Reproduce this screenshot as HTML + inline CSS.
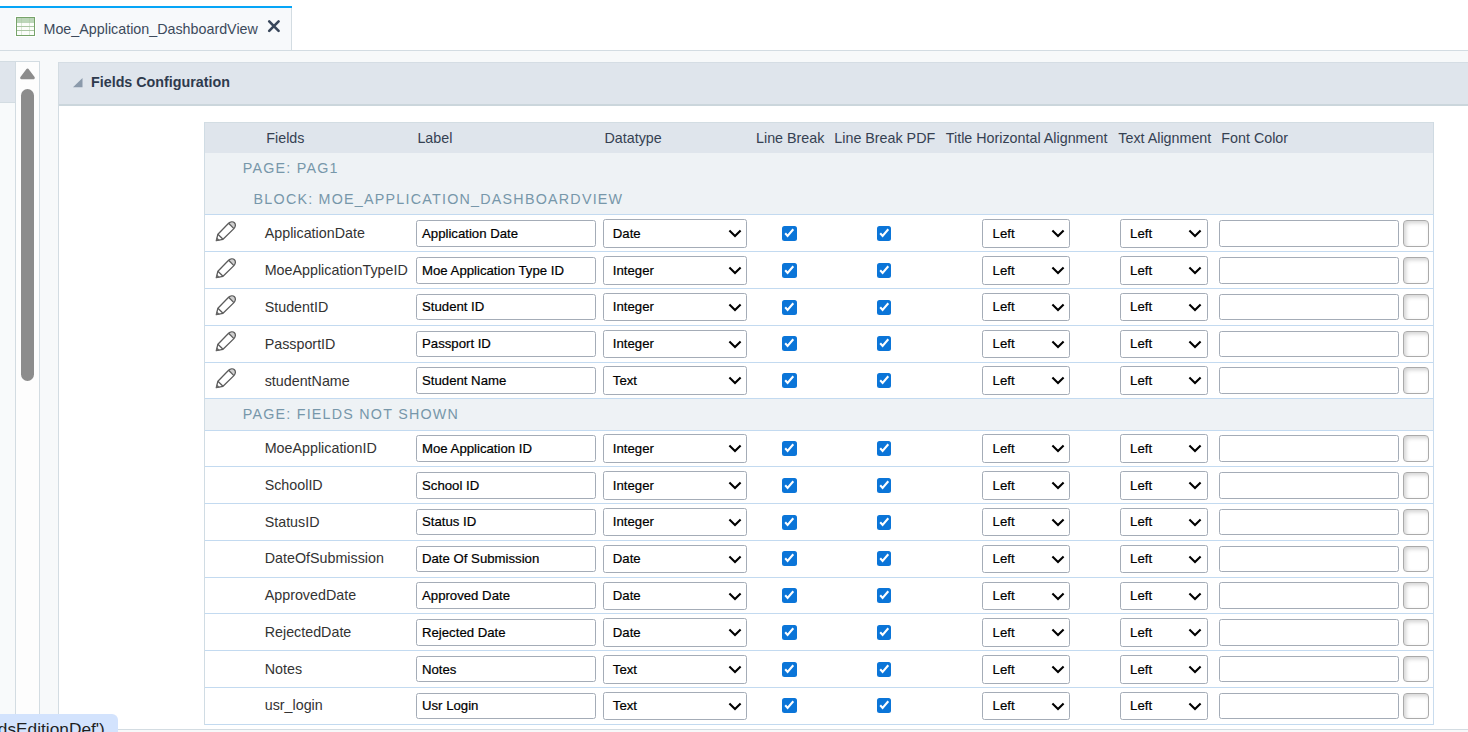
<!DOCTYPE html>
<html><head><meta charset="utf-8"><style>
html,body{margin:0;padding:0;}
body{width:1468px;height:732px;overflow:hidden;position:relative;background:#fff;font-family:"Liberation Sans", sans-serif;}
.t{position:absolute;white-space:nowrap;}
</style></head><body>
<div style="position:absolute;left:0px;top:0px;width:1468px;height:50px;background:#ffffff"></div><div style="position:absolute;left:0px;top:6px;width:291px;height:44px;background:#f7f9fb"></div><div style="position:absolute;left:0px;top:6px;width:292px;height:2px;background:#06a5f7"></div><div style="position:absolute;left:291px;top:8px;width:1px;height:42px;background:#d3dce2"></div><div style="position:absolute;left:0px;top:50px;width:1468px;height:1px;background:#d3dce2"></div><div style="position:absolute;left:0px;top:51px;width:1468px;height:681px;background:#f7f9fa"></div><svg style="position:absolute;left:15px;top:16px" width="21" height="21" viewBox="0 0 21 21">
<rect x="0" y="0" width="21" height="21" fill="#ffffff"/>
<rect x="1.5" y="1.5" width="18" height="18" fill="#fbfdfa" stroke="#76a36a" stroke-width="1"/>
<rect x="2" y="2" width="17" height="5" fill="#bcd6b9"/>
<line x1="2" y1="10.5" x2="19" y2="10.5" stroke="#abc6a4" stroke-width="1"/>
<line x1="2" y1="14.5" x2="19" y2="14.5" stroke="#abc6a4" stroke-width="1"/>
<line x1="6.5" y1="2" x2="6.5" y2="19" stroke="#a8c6a0" stroke-opacity="0.4" stroke-width="1"/>
<line x1="14.5" y1="2" x2="14.5" y2="19" stroke="#a8c6a0" stroke-opacity="0.4" stroke-width="1"/>
</svg><div class="t" style="left:43.5px;top:22.00px;font-size:14.3px;line-height:15.973px;color:#3c4a5c;font-weight:normal;letter-spacing:0px;">Moe_Application_DashboardView</div><svg style="position:absolute;left:266px;top:19px" width="15" height="15" viewBox="0 0 15 15">
<path d="M3.2 2.4 L12.6 11.8 M12.6 2.4 L3.2 11.8" stroke="#38465a" stroke-width="2.6" stroke-linecap="round"/>
</svg><div style="position:absolute;left:0px;top:61px;width:40px;height:1px;background:#d3dce2"></div><div style="position:absolute;left:0px;top:62px;width:15px;height:41px;background:#dfe5ec"></div><div style="position:absolute;left:0px;top:102px;width:15px;height:1px;background:#d3dce2"></div><div style="position:absolute;left:0px;top:103px;width:15px;height:629px;background:#f8fafb"></div><div style="position:absolute;left:15px;top:62px;width:1px;height:670px;background:#d3dce2"></div><div style="position:absolute;left:16px;top:62px;width:23px;height:670px;background:#fdfdfd"></div><div style="position:absolute;left:39px;top:61px;width:1px;height:671px;background:#d3dce2"></div><svg style="position:absolute;left:19px;top:67px" width="17" height="14" viewBox="0 0 17 14">
<path d="M8.5 2.9 L14.5 10.9 L2.5 10.9 Z" fill="#8c8c8c" stroke="#8c8c8c" stroke-width="2.6" stroke-linejoin="round"/>
</svg><div style="position:absolute;left:21px;top:89px;width:13px;height:292px;background:#8c8c8c;border-radius:6.5px"></div><div style="position:absolute;left:58px;top:62px;width:1px;height:670px;background:#d3dce2"></div><div style="position:absolute;left:59px;top:62px;width:1409px;height:42px;background:#dfe5ec"></div><div style="position:absolute;left:59px;top:62px;width:1409px;height:1px;background:#d5dde4"></div><div style="position:absolute;left:59px;top:104px;width:1409px;height:2px;background:#cbd6dc"></div><div style="position:absolute;left:59px;top:106px;width:1409px;height:623px;background:#ffffff"></div><div style="position:absolute;left:59px;top:729px;width:1409px;height:1px;background:#d3dce2"></div><svg style="position:absolute;left:72px;top:77px" width="12" height="12" viewBox="0 0 12 12">
<path d="M10.5 1 L10.5 10.3 L1 10.3 Z" fill="#8b9aab"/>
</svg><div class="t" style="left:91px;top:75.00px;font-size:14.3px;line-height:15.973px;color:#2e3a4d;font-weight:bold;letter-spacing:0px;">Fields Configuration</div><div style="position:absolute;left:204px;top:122px;width:1230px;height:1px;background:#d3dde3"></div><div style="position:absolute;left:204px;top:123px;width:1230px;height:30.5px;background:#dfe5ec"></div><div style="position:absolute;left:204px;top:152.5px;width:1230px;height:61.5px;background:#eef2f5"></div><div style="position:absolute;left:204px;top:398px;width:1230px;height:32px;background:#eef2f5"></div><div style="position:absolute;left:204px;top:122px;width:1px;height:603px;background:#d0dce4"></div><div style="position:absolute;left:1433px;top:122px;width:1px;height:92px;background:#cfdae2"></div><div style="position:absolute;left:1433px;top:214px;width:1px;height:511px;background:#c9dcee"></div><div class="t" style="left:266.3px;top:131.00px;font-size:14.3px;line-height:15.973px;color:#354152;font-weight:normal;letter-spacing:0px;">Fields</div><div class="t" style="left:417.4px;top:131.00px;font-size:14.3px;line-height:15.973px;color:#354152;font-weight:normal;letter-spacing:0px;">Label</div><div class="t" style="left:604.5px;top:131.00px;font-size:14.3px;line-height:15.973px;color:#354152;font-weight:normal;letter-spacing:0px;">Datatype</div><div class="t" style="left:756px;top:131.00px;font-size:14.3px;line-height:15.973px;color:#354152;font-weight:normal;letter-spacing:0px;">Line Break</div><div class="t" style="left:834.3px;top:131.00px;font-size:14.3px;line-height:15.973px;color:#354152;font-weight:normal;letter-spacing:0px;">Line Break PDF</div><div class="t" style="left:945.8px;top:131.00px;font-size:14.3px;line-height:15.973px;color:#354152;font-weight:normal;letter-spacing:0px;">Title Horizontal Alignment</div><div class="t" style="left:1118.3px;top:131.00px;font-size:14.3px;line-height:15.973px;color:#354152;font-weight:normal;letter-spacing:0px;">Text Alignment</div><div class="t" style="left:1221.3px;top:131.00px;font-size:14.3px;line-height:15.973px;color:#354152;font-weight:normal;letter-spacing:0px;">Font Color</div><div class="t" style="left:242.7px;top:161.00px;font-size:14.3px;line-height:15.973px;color:#7797aa;font-weight:normal;letter-spacing:1.23px;">PAGE: PAG1</div><div class="t" style="left:253.6px;top:192.00px;font-size:14.3px;line-height:15.973px;color:#7797aa;font-weight:normal;letter-spacing:1.23px;">BLOCK: MOE_APPLICATION_DASHBOARDVIEW</div><div class="t" style="left:242.7px;top:407.00px;font-size:14.3px;line-height:15.973px;color:#7797aa;font-weight:normal;letter-spacing:1.23px;">PAGE: FIELDS NOT SHOWN</div><div style="position:absolute;left:205px;top:214px;width:1228px;height:1px;background:#c3daf0"></div><div style="position:absolute;left:205px;top:251px;width:1228px;height:1px;background:#c3daf0"></div><div style="position:absolute;left:205px;top:288px;width:1228px;height:1px;background:#c3daf0"></div><div style="position:absolute;left:205px;top:325px;width:1228px;height:1px;background:#c3daf0"></div><div style="position:absolute;left:205px;top:362px;width:1228px;height:1px;background:#c3daf0"></div><div style="position:absolute;left:205px;top:398px;width:1228px;height:1px;background:#c3daf0"></div><div style="position:absolute;left:205px;top:430px;width:1228px;height:1px;background:#c3daf0"></div><div style="position:absolute;left:205px;top:466px;width:1228px;height:1px;background:#c3daf0"></div><div style="position:absolute;left:205px;top:503px;width:1228px;height:1px;background:#c3daf0"></div><div style="position:absolute;left:205px;top:540px;width:1228px;height:1px;background:#c3daf0"></div><div style="position:absolute;left:205px;top:577px;width:1228px;height:1px;background:#c3daf0"></div><div style="position:absolute;left:205px;top:613px;width:1228px;height:1px;background:#c3daf0"></div><div style="position:absolute;left:205px;top:650px;width:1228px;height:1px;background:#c3daf0"></div><div style="position:absolute;left:205px;top:687px;width:1228px;height:1px;background:#c3daf0"></div><div style="position:absolute;left:205px;top:724px;width:1228px;height:1px;background:#c3daf0"></div><svg style="position:absolute;left:205px;top:215px" width="40" height="32" viewBox="0 0 40 32">
<path d="M23.6 8.3 A3.75 3.1 -45 0 1 28.9 13.6 Z" fill="#cfcfcf"/>
<g fill="none" stroke="#5c5c5c" stroke-width="1.3" stroke-linejoin="round">
<path d="M11.3 25.7 L12.9 19.2 L23.6 8.3 A3.75 3.1 -45 0 1 28.9 13.6 L18 24.3 Z"/>
<path d="M12.9 19.2 L18 24.3"/>
<path d="M23.6 8.3 L28.9 13.6"/>
</g>
<path d="M11.0 26.0 L11.8 22.2 L14.8 25.2 Z" fill="#6a6a6a"/>
</svg><div class="t" style="left:264.7px;top:226.00px;font-size:14.3px;line-height:15.973px;color:#333333;font-weight:normal;letter-spacing:0px;">ApplicationDate</div><div style="position:absolute;left:416px;top:220px;width:180px;height:27px;box-sizing:border-box;border:1px solid #a4acb7;border-radius:2.5px;background:#fff"></div><div class="t" style="left:422px;top:227.00px;font-size:13.2px;line-height:14.744px;color:#000;font-weight:normal;letter-spacing:0px;-webkit-text-stroke:0.2px #000">Application Date</div><div style="position:absolute;left:603px;top:219px;width:144px;height:29px;box-sizing:border-box;border:1px solid #a4acb7;border-radius:2.5px;background:#fff"></div><div class="t" style="left:612.8px;top:227.00px;font-size:13.2px;line-height:14.744px;color:#000;font-weight:normal;letter-spacing:0px;-webkit-text-stroke:0.2px #000">Date</div><svg style="position:absolute;left:727.5px;top:228.7px" width="14" height="9" viewBox="0 0 14 9"><path d="M1.4 1.6 L7 7 L12.6 1.6" fill="none" stroke="#000" stroke-width="2.1"/></svg><div style="position:absolute;left:782.2px;top:226px;width:14.6px;height:14.6px;background:#0b75d8;border-radius:2.5px"><svg style="position:absolute;left:0;top:0" width="14.6" height="14.6" viewBox="0 0 14.6 14.6"><path d="M3.2 7.3 L5.6 9.9 L11.3 3.3" fill="none" stroke="#fff" stroke-width="2.1"/></svg></div><div style="position:absolute;left:876.9px;top:226px;width:14.6px;height:14.6px;background:#0b75d8;border-radius:2.5px"><svg style="position:absolute;left:0;top:0" width="14.6" height="14.6" viewBox="0 0 14.6 14.6"><path d="M3.2 7.3 L5.6 9.9 L11.3 3.3" fill="none" stroke="#fff" stroke-width="2.1"/></svg></div><div style="position:absolute;left:982px;top:219px;width:88px;height:29px;box-sizing:border-box;border:1px solid #a4acb7;border-radius:2.5px;background:#fff"></div><div class="t" style="left:992.6px;top:227.00px;font-size:13.2px;line-height:14.744px;color:#000;font-weight:normal;letter-spacing:0px;-webkit-text-stroke:0.2px #000">Left</div><svg style="position:absolute;left:1050.5px;top:228.7px" width="14" height="9" viewBox="0 0 14 9"><path d="M1.4 1.6 L7 7 L12.6 1.6" fill="none" stroke="#000" stroke-width="2.1"/></svg><div style="position:absolute;left:1120px;top:219px;width:88px;height:29px;box-sizing:border-box;border:1px solid #a4acb7;border-radius:2.5px;background:#fff"></div><div class="t" style="left:1130.1px;top:227.00px;font-size:13.2px;line-height:14.744px;color:#000;font-weight:normal;letter-spacing:0px;-webkit-text-stroke:0.2px #000">Left</div><svg style="position:absolute;left:1188.3px;top:228.7px" width="14" height="9" viewBox="0 0 14 9"><path d="M1.4 1.6 L7 7 L12.6 1.6" fill="none" stroke="#000" stroke-width="2.1"/></svg><div style="position:absolute;left:1219px;top:220px;width:180px;height:27px;box-sizing:border-box;border:1px solid #a4acb7;border-radius:2.5px;background:#fff"></div><div style="position:absolute;left:1403px;top:220px;width:26px;height:27px;box-sizing:border-box;border:1.1px solid #aaaaaa;border-radius:4px;background:#fff;box-shadow:inset 2px 2px 4px rgba(0,0,0,0.18)"></div><svg style="position:absolute;left:205px;top:252px" width="40" height="32" viewBox="0 0 40 32">
<path d="M23.6 8.3 A3.75 3.1 -45 0 1 28.9 13.6 Z" fill="#cfcfcf"/>
<g fill="none" stroke="#5c5c5c" stroke-width="1.3" stroke-linejoin="round">
<path d="M11.3 25.7 L12.9 19.2 L23.6 8.3 A3.75 3.1 -45 0 1 28.9 13.6 L18 24.3 Z"/>
<path d="M12.9 19.2 L18 24.3"/>
<path d="M23.6 8.3 L28.9 13.6"/>
</g>
<path d="M11.0 26.0 L11.8 22.2 L14.8 25.2 Z" fill="#6a6a6a"/>
</svg><div class="t" style="left:264.7px;top:263.00px;font-size:14.3px;line-height:15.973px;color:#333333;font-weight:normal;letter-spacing:0px;">MoeApplicationTypeID</div><div style="position:absolute;left:416px;top:257px;width:180px;height:27px;box-sizing:border-box;border:1px solid #a4acb7;border-radius:2.5px;background:#fff"></div><div class="t" style="left:422px;top:264.00px;font-size:13.2px;line-height:14.744px;color:#000;font-weight:normal;letter-spacing:0px;-webkit-text-stroke:0.2px #000">Moe Application Type ID</div><div style="position:absolute;left:603px;top:256px;width:144px;height:29px;box-sizing:border-box;border:1px solid #a4acb7;border-radius:2.5px;background:#fff"></div><div class="t" style="left:612.8px;top:264.00px;font-size:13.2px;line-height:14.744px;color:#000;font-weight:normal;letter-spacing:0px;-webkit-text-stroke:0.2px #000">Integer</div><svg style="position:absolute;left:727.5px;top:265.7px" width="14" height="9" viewBox="0 0 14 9"><path d="M1.4 1.6 L7 7 L12.6 1.6" fill="none" stroke="#000" stroke-width="2.1"/></svg><div style="position:absolute;left:782.2px;top:263px;width:14.6px;height:14.6px;background:#0b75d8;border-radius:2.5px"><svg style="position:absolute;left:0;top:0" width="14.6" height="14.6" viewBox="0 0 14.6 14.6"><path d="M3.2 7.3 L5.6 9.9 L11.3 3.3" fill="none" stroke="#fff" stroke-width="2.1"/></svg></div><div style="position:absolute;left:876.9px;top:263px;width:14.6px;height:14.6px;background:#0b75d8;border-radius:2.5px"><svg style="position:absolute;left:0;top:0" width="14.6" height="14.6" viewBox="0 0 14.6 14.6"><path d="M3.2 7.3 L5.6 9.9 L11.3 3.3" fill="none" stroke="#fff" stroke-width="2.1"/></svg></div><div style="position:absolute;left:982px;top:256px;width:88px;height:29px;box-sizing:border-box;border:1px solid #a4acb7;border-radius:2.5px;background:#fff"></div><div class="t" style="left:992.6px;top:264.00px;font-size:13.2px;line-height:14.744px;color:#000;font-weight:normal;letter-spacing:0px;-webkit-text-stroke:0.2px #000">Left</div><svg style="position:absolute;left:1050.5px;top:265.7px" width="14" height="9" viewBox="0 0 14 9"><path d="M1.4 1.6 L7 7 L12.6 1.6" fill="none" stroke="#000" stroke-width="2.1"/></svg><div style="position:absolute;left:1120px;top:256px;width:88px;height:29px;box-sizing:border-box;border:1px solid #a4acb7;border-radius:2.5px;background:#fff"></div><div class="t" style="left:1130.1px;top:264.00px;font-size:13.2px;line-height:14.744px;color:#000;font-weight:normal;letter-spacing:0px;-webkit-text-stroke:0.2px #000">Left</div><svg style="position:absolute;left:1188.3px;top:265.7px" width="14" height="9" viewBox="0 0 14 9"><path d="M1.4 1.6 L7 7 L12.6 1.6" fill="none" stroke="#000" stroke-width="2.1"/></svg><div style="position:absolute;left:1219px;top:257px;width:180px;height:27px;box-sizing:border-box;border:1px solid #a4acb7;border-radius:2.5px;background:#fff"></div><div style="position:absolute;left:1403px;top:257px;width:26px;height:27px;box-sizing:border-box;border:1.1px solid #aaaaaa;border-radius:4px;background:#fff;box-shadow:inset 2px 2px 4px rgba(0,0,0,0.18)"></div><svg style="position:absolute;left:205px;top:289px" width="40" height="32" viewBox="0 0 40 32">
<path d="M23.6 8.3 A3.75 3.1 -45 0 1 28.9 13.6 Z" fill="#cfcfcf"/>
<g fill="none" stroke="#5c5c5c" stroke-width="1.3" stroke-linejoin="round">
<path d="M11.3 25.7 L12.9 19.2 L23.6 8.3 A3.75 3.1 -45 0 1 28.9 13.6 L18 24.3 Z"/>
<path d="M12.9 19.2 L18 24.3"/>
<path d="M23.6 8.3 L28.9 13.6"/>
</g>
<path d="M11.0 26.0 L11.8 22.2 L14.8 25.2 Z" fill="#6a6a6a"/>
</svg><div class="t" style="left:264.7px;top:300.00px;font-size:14.3px;line-height:15.973px;color:#333333;font-weight:normal;letter-spacing:0px;">StudentID</div><div style="position:absolute;left:416px;top:294px;width:180px;height:26px;box-sizing:border-box;border:1px solid #a4acb7;border-radius:2.5px;background:#fff"></div><div class="t" style="left:422px;top:300.00px;font-size:13.2px;line-height:14.744px;color:#000;font-weight:normal;letter-spacing:0px;-webkit-text-stroke:0.2px #000">Student ID</div><div style="position:absolute;left:603px;top:293px;width:144px;height:28px;box-sizing:border-box;border:1px solid #a4acb7;border-radius:2.5px;background:#fff"></div><div class="t" style="left:612.8px;top:300.00px;font-size:13.2px;line-height:14.744px;color:#000;font-weight:normal;letter-spacing:0px;-webkit-text-stroke:0.2px #000">Integer</div><svg style="position:absolute;left:727.5px;top:302.7px" width="14" height="9" viewBox="0 0 14 9"><path d="M1.4 1.6 L7 7 L12.6 1.6" fill="none" stroke="#000" stroke-width="2.1"/></svg><div style="position:absolute;left:782.2px;top:300px;width:14.6px;height:14.6px;background:#0b75d8;border-radius:2.5px"><svg style="position:absolute;left:0;top:0" width="14.6" height="14.6" viewBox="0 0 14.6 14.6"><path d="M3.2 7.3 L5.6 9.9 L11.3 3.3" fill="none" stroke="#fff" stroke-width="2.1"/></svg></div><div style="position:absolute;left:876.9px;top:300px;width:14.6px;height:14.6px;background:#0b75d8;border-radius:2.5px"><svg style="position:absolute;left:0;top:0" width="14.6" height="14.6" viewBox="0 0 14.6 14.6"><path d="M3.2 7.3 L5.6 9.9 L11.3 3.3" fill="none" stroke="#fff" stroke-width="2.1"/></svg></div><div style="position:absolute;left:982px;top:293px;width:88px;height:28px;box-sizing:border-box;border:1px solid #a4acb7;border-radius:2.5px;background:#fff"></div><div class="t" style="left:992.6px;top:300.00px;font-size:13.2px;line-height:14.744px;color:#000;font-weight:normal;letter-spacing:0px;-webkit-text-stroke:0.2px #000">Left</div><svg style="position:absolute;left:1050.5px;top:302.7px" width="14" height="9" viewBox="0 0 14 9"><path d="M1.4 1.6 L7 7 L12.6 1.6" fill="none" stroke="#000" stroke-width="2.1"/></svg><div style="position:absolute;left:1120px;top:293px;width:88px;height:28px;box-sizing:border-box;border:1px solid #a4acb7;border-radius:2.5px;background:#fff"></div><div class="t" style="left:1130.1px;top:300.00px;font-size:13.2px;line-height:14.744px;color:#000;font-weight:normal;letter-spacing:0px;-webkit-text-stroke:0.2px #000">Left</div><svg style="position:absolute;left:1188.3px;top:302.7px" width="14" height="9" viewBox="0 0 14 9"><path d="M1.4 1.6 L7 7 L12.6 1.6" fill="none" stroke="#000" stroke-width="2.1"/></svg><div style="position:absolute;left:1219px;top:294px;width:180px;height:26px;box-sizing:border-box;border:1px solid #a4acb7;border-radius:2.5px;background:#fff"></div><div style="position:absolute;left:1403px;top:294px;width:26px;height:26px;box-sizing:border-box;border:1.1px solid #aaaaaa;border-radius:4px;background:#fff;box-shadow:inset 2px 2px 4px rgba(0,0,0,0.18)"></div><svg style="position:absolute;left:205px;top:325px" width="40" height="32" viewBox="0 0 40 32">
<path d="M23.6 8.3 A3.75 3.1 -45 0 1 28.9 13.6 Z" fill="#cfcfcf"/>
<g fill="none" stroke="#5c5c5c" stroke-width="1.3" stroke-linejoin="round">
<path d="M11.3 25.7 L12.9 19.2 L23.6 8.3 A3.75 3.1 -45 0 1 28.9 13.6 L18 24.3 Z"/>
<path d="M12.9 19.2 L18 24.3"/>
<path d="M23.6 8.3 L28.9 13.6"/>
</g>
<path d="M11.0 26.0 L11.8 22.2 L14.8 25.2 Z" fill="#6a6a6a"/>
</svg><div class="t" style="left:264.7px;top:337.00px;font-size:14.3px;line-height:15.973px;color:#333333;font-weight:normal;letter-spacing:0px;">PassportID</div><div style="position:absolute;left:416px;top:331px;width:180px;height:26px;box-sizing:border-box;border:1px solid #a4acb7;border-radius:2.5px;background:#fff"></div><div class="t" style="left:422px;top:337.00px;font-size:13.2px;line-height:14.744px;color:#000;font-weight:normal;letter-spacing:0px;-webkit-text-stroke:0.2px #000">Passport ID</div><div style="position:absolute;left:603px;top:330px;width:144px;height:28px;box-sizing:border-box;border:1px solid #a4acb7;border-radius:2.5px;background:#fff"></div><div class="t" style="left:612.8px;top:337.00px;font-size:13.2px;line-height:14.744px;color:#000;font-weight:normal;letter-spacing:0px;-webkit-text-stroke:0.2px #000">Integer</div><svg style="position:absolute;left:727.5px;top:339.7px" width="14" height="9" viewBox="0 0 14 9"><path d="M1.4 1.6 L7 7 L12.6 1.6" fill="none" stroke="#000" stroke-width="2.1"/></svg><div style="position:absolute;left:782.2px;top:336px;width:14.6px;height:14.6px;background:#0b75d8;border-radius:2.5px"><svg style="position:absolute;left:0;top:0" width="14.6" height="14.6" viewBox="0 0 14.6 14.6"><path d="M3.2 7.3 L5.6 9.9 L11.3 3.3" fill="none" stroke="#fff" stroke-width="2.1"/></svg></div><div style="position:absolute;left:876.9px;top:336px;width:14.6px;height:14.6px;background:#0b75d8;border-radius:2.5px"><svg style="position:absolute;left:0;top:0" width="14.6" height="14.6" viewBox="0 0 14.6 14.6"><path d="M3.2 7.3 L5.6 9.9 L11.3 3.3" fill="none" stroke="#fff" stroke-width="2.1"/></svg></div><div style="position:absolute;left:982px;top:330px;width:88px;height:28px;box-sizing:border-box;border:1px solid #a4acb7;border-radius:2.5px;background:#fff"></div><div class="t" style="left:992.6px;top:337.00px;font-size:13.2px;line-height:14.744px;color:#000;font-weight:normal;letter-spacing:0px;-webkit-text-stroke:0.2px #000">Left</div><svg style="position:absolute;left:1050.5px;top:339.7px" width="14" height="9" viewBox="0 0 14 9"><path d="M1.4 1.6 L7 7 L12.6 1.6" fill="none" stroke="#000" stroke-width="2.1"/></svg><div style="position:absolute;left:1120px;top:330px;width:88px;height:28px;box-sizing:border-box;border:1px solid #a4acb7;border-radius:2.5px;background:#fff"></div><div class="t" style="left:1130.1px;top:337.00px;font-size:13.2px;line-height:14.744px;color:#000;font-weight:normal;letter-spacing:0px;-webkit-text-stroke:0.2px #000">Left</div><svg style="position:absolute;left:1188.3px;top:339.7px" width="14" height="9" viewBox="0 0 14 9"><path d="M1.4 1.6 L7 7 L12.6 1.6" fill="none" stroke="#000" stroke-width="2.1"/></svg><div style="position:absolute;left:1219px;top:331px;width:180px;height:26px;box-sizing:border-box;border:1px solid #a4acb7;border-radius:2.5px;background:#fff"></div><div style="position:absolute;left:1403px;top:331px;width:26px;height:26px;box-sizing:border-box;border:1.1px solid #aaaaaa;border-radius:4px;background:#fff;box-shadow:inset 2px 2px 4px rgba(0,0,0,0.18)"></div><svg style="position:absolute;left:205px;top:362px" width="40" height="32" viewBox="0 0 40 32">
<path d="M23.6 8.3 A3.75 3.1 -45 0 1 28.9 13.6 Z" fill="#cfcfcf"/>
<g fill="none" stroke="#5c5c5c" stroke-width="1.3" stroke-linejoin="round">
<path d="M11.3 25.7 L12.9 19.2 L23.6 8.3 A3.75 3.1 -45 0 1 28.9 13.6 L18 24.3 Z"/>
<path d="M12.9 19.2 L18 24.3"/>
<path d="M23.6 8.3 L28.9 13.6"/>
</g>
<path d="M11.0 26.0 L11.8 22.2 L14.8 25.2 Z" fill="#6a6a6a"/>
</svg><div class="t" style="left:264.7px;top:374.00px;font-size:14.3px;line-height:15.973px;color:#333333;font-weight:normal;letter-spacing:0px;">studentName</div><div style="position:absolute;left:416px;top:367px;width:180px;height:27px;box-sizing:border-box;border:1px solid #a4acb7;border-radius:2.5px;background:#fff"></div><div class="t" style="left:422px;top:374.00px;font-size:13.2px;line-height:14.744px;color:#000;font-weight:normal;letter-spacing:0px;-webkit-text-stroke:0.2px #000">Student Name</div><div style="position:absolute;left:603px;top:366px;width:144px;height:29px;box-sizing:border-box;border:1px solid #a4acb7;border-radius:2.5px;background:#fff"></div><div class="t" style="left:612.8px;top:374.00px;font-size:13.2px;line-height:14.744px;color:#000;font-weight:normal;letter-spacing:0px;-webkit-text-stroke:0.2px #000">Text</div><svg style="position:absolute;left:727.5px;top:375.7px" width="14" height="9" viewBox="0 0 14 9"><path d="M1.4 1.6 L7 7 L12.6 1.6" fill="none" stroke="#000" stroke-width="2.1"/></svg><div style="position:absolute;left:782.2px;top:373px;width:14.6px;height:14.6px;background:#0b75d8;border-radius:2.5px"><svg style="position:absolute;left:0;top:0" width="14.6" height="14.6" viewBox="0 0 14.6 14.6"><path d="M3.2 7.3 L5.6 9.9 L11.3 3.3" fill="none" stroke="#fff" stroke-width="2.1"/></svg></div><div style="position:absolute;left:876.9px;top:373px;width:14.6px;height:14.6px;background:#0b75d8;border-radius:2.5px"><svg style="position:absolute;left:0;top:0" width="14.6" height="14.6" viewBox="0 0 14.6 14.6"><path d="M3.2 7.3 L5.6 9.9 L11.3 3.3" fill="none" stroke="#fff" stroke-width="2.1"/></svg></div><div style="position:absolute;left:982px;top:366px;width:88px;height:29px;box-sizing:border-box;border:1px solid #a4acb7;border-radius:2.5px;background:#fff"></div><div class="t" style="left:992.6px;top:374.00px;font-size:13.2px;line-height:14.744px;color:#000;font-weight:normal;letter-spacing:0px;-webkit-text-stroke:0.2px #000">Left</div><svg style="position:absolute;left:1050.5px;top:375.7px" width="14" height="9" viewBox="0 0 14 9"><path d="M1.4 1.6 L7 7 L12.6 1.6" fill="none" stroke="#000" stroke-width="2.1"/></svg><div style="position:absolute;left:1120px;top:366px;width:88px;height:29px;box-sizing:border-box;border:1px solid #a4acb7;border-radius:2.5px;background:#fff"></div><div class="t" style="left:1130.1px;top:374.00px;font-size:13.2px;line-height:14.744px;color:#000;font-weight:normal;letter-spacing:0px;-webkit-text-stroke:0.2px #000">Left</div><svg style="position:absolute;left:1188.3px;top:375.7px" width="14" height="9" viewBox="0 0 14 9"><path d="M1.4 1.6 L7 7 L12.6 1.6" fill="none" stroke="#000" stroke-width="2.1"/></svg><div style="position:absolute;left:1219px;top:367px;width:180px;height:27px;box-sizing:border-box;border:1px solid #a4acb7;border-radius:2.5px;background:#fff"></div><div style="position:absolute;left:1403px;top:367px;width:26px;height:27px;box-sizing:border-box;border:1.1px solid #aaaaaa;border-radius:4px;background:#fff;box-shadow:inset 2px 2px 4px rgba(0,0,0,0.18)"></div><div class="t" style="left:264.7px;top:441.00px;font-size:14.3px;line-height:15.973px;color:#333333;font-weight:normal;letter-spacing:0px;">MoeApplicationID</div><div style="position:absolute;left:416px;top:435px;width:180px;height:27px;box-sizing:border-box;border:1px solid #a4acb7;border-radius:2.5px;background:#fff"></div><div class="t" style="left:422px;top:442.00px;font-size:13.2px;line-height:14.744px;color:#000;font-weight:normal;letter-spacing:0px;-webkit-text-stroke:0.2px #000">Moe Application ID</div><div style="position:absolute;left:603px;top:434px;width:144px;height:29px;box-sizing:border-box;border:1px solid #a4acb7;border-radius:2.5px;background:#fff"></div><div class="t" style="left:612.8px;top:442.00px;font-size:13.2px;line-height:14.744px;color:#000;font-weight:normal;letter-spacing:0px;-webkit-text-stroke:0.2px #000">Integer</div><svg style="position:absolute;left:727.5px;top:443.7px" width="14" height="9" viewBox="0 0 14 9"><path d="M1.4 1.6 L7 7 L12.6 1.6" fill="none" stroke="#000" stroke-width="2.1"/></svg><div style="position:absolute;left:782.2px;top:441px;width:14.6px;height:14.6px;background:#0b75d8;border-radius:2.5px"><svg style="position:absolute;left:0;top:0" width="14.6" height="14.6" viewBox="0 0 14.6 14.6"><path d="M3.2 7.3 L5.6 9.9 L11.3 3.3" fill="none" stroke="#fff" stroke-width="2.1"/></svg></div><div style="position:absolute;left:876.9px;top:441px;width:14.6px;height:14.6px;background:#0b75d8;border-radius:2.5px"><svg style="position:absolute;left:0;top:0" width="14.6" height="14.6" viewBox="0 0 14.6 14.6"><path d="M3.2 7.3 L5.6 9.9 L11.3 3.3" fill="none" stroke="#fff" stroke-width="2.1"/></svg></div><div style="position:absolute;left:982px;top:434px;width:88px;height:29px;box-sizing:border-box;border:1px solid #a4acb7;border-radius:2.5px;background:#fff"></div><div class="t" style="left:992.6px;top:442.00px;font-size:13.2px;line-height:14.744px;color:#000;font-weight:normal;letter-spacing:0px;-webkit-text-stroke:0.2px #000">Left</div><svg style="position:absolute;left:1050.5px;top:443.7px" width="14" height="9" viewBox="0 0 14 9"><path d="M1.4 1.6 L7 7 L12.6 1.6" fill="none" stroke="#000" stroke-width="2.1"/></svg><div style="position:absolute;left:1120px;top:434px;width:88px;height:29px;box-sizing:border-box;border:1px solid #a4acb7;border-radius:2.5px;background:#fff"></div><div class="t" style="left:1130.1px;top:442.00px;font-size:13.2px;line-height:14.744px;color:#000;font-weight:normal;letter-spacing:0px;-webkit-text-stroke:0.2px #000">Left</div><svg style="position:absolute;left:1188.3px;top:443.7px" width="14" height="9" viewBox="0 0 14 9"><path d="M1.4 1.6 L7 7 L12.6 1.6" fill="none" stroke="#000" stroke-width="2.1"/></svg><div style="position:absolute;left:1219px;top:435px;width:180px;height:27px;box-sizing:border-box;border:1px solid #a4acb7;border-radius:2.5px;background:#fff"></div><div style="position:absolute;left:1403px;top:435px;width:26px;height:27px;box-sizing:border-box;border:1.1px solid #aaaaaa;border-radius:4px;background:#fff;box-shadow:inset 2px 2px 4px rgba(0,0,0,0.18)"></div><div class="t" style="left:264.7px;top:478.00px;font-size:14.3px;line-height:15.973px;color:#333333;font-weight:normal;letter-spacing:0px;">SchoolID</div><div style="position:absolute;left:416px;top:472px;width:180px;height:27px;box-sizing:border-box;border:1px solid #a4acb7;border-radius:2.5px;background:#fff"></div><div class="t" style="left:422px;top:479.00px;font-size:13.2px;line-height:14.744px;color:#000;font-weight:normal;letter-spacing:0px;-webkit-text-stroke:0.2px #000">School ID</div><div style="position:absolute;left:603px;top:471px;width:144px;height:29px;box-sizing:border-box;border:1px solid #a4acb7;border-radius:2.5px;background:#fff"></div><div class="t" style="left:612.8px;top:479.00px;font-size:13.2px;line-height:14.744px;color:#000;font-weight:normal;letter-spacing:0px;-webkit-text-stroke:0.2px #000">Integer</div><svg style="position:absolute;left:727.5px;top:480.7px" width="14" height="9" viewBox="0 0 14 9"><path d="M1.4 1.6 L7 7 L12.6 1.6" fill="none" stroke="#000" stroke-width="2.1"/></svg><div style="position:absolute;left:782.2px;top:478px;width:14.6px;height:14.6px;background:#0b75d8;border-radius:2.5px"><svg style="position:absolute;left:0;top:0" width="14.6" height="14.6" viewBox="0 0 14.6 14.6"><path d="M3.2 7.3 L5.6 9.9 L11.3 3.3" fill="none" stroke="#fff" stroke-width="2.1"/></svg></div><div style="position:absolute;left:876.9px;top:478px;width:14.6px;height:14.6px;background:#0b75d8;border-radius:2.5px"><svg style="position:absolute;left:0;top:0" width="14.6" height="14.6" viewBox="0 0 14.6 14.6"><path d="M3.2 7.3 L5.6 9.9 L11.3 3.3" fill="none" stroke="#fff" stroke-width="2.1"/></svg></div><div style="position:absolute;left:982px;top:471px;width:88px;height:29px;box-sizing:border-box;border:1px solid #a4acb7;border-radius:2.5px;background:#fff"></div><div class="t" style="left:992.6px;top:479.00px;font-size:13.2px;line-height:14.744px;color:#000;font-weight:normal;letter-spacing:0px;-webkit-text-stroke:0.2px #000">Left</div><svg style="position:absolute;left:1050.5px;top:480.7px" width="14" height="9" viewBox="0 0 14 9"><path d="M1.4 1.6 L7 7 L12.6 1.6" fill="none" stroke="#000" stroke-width="2.1"/></svg><div style="position:absolute;left:1120px;top:471px;width:88px;height:29px;box-sizing:border-box;border:1px solid #a4acb7;border-radius:2.5px;background:#fff"></div><div class="t" style="left:1130.1px;top:479.00px;font-size:13.2px;line-height:14.744px;color:#000;font-weight:normal;letter-spacing:0px;-webkit-text-stroke:0.2px #000">Left</div><svg style="position:absolute;left:1188.3px;top:480.7px" width="14" height="9" viewBox="0 0 14 9"><path d="M1.4 1.6 L7 7 L12.6 1.6" fill="none" stroke="#000" stroke-width="2.1"/></svg><div style="position:absolute;left:1219px;top:472px;width:180px;height:27px;box-sizing:border-box;border:1px solid #a4acb7;border-radius:2.5px;background:#fff"></div><div style="position:absolute;left:1403px;top:472px;width:26px;height:27px;box-sizing:border-box;border:1.1px solid #aaaaaa;border-radius:4px;background:#fff;box-shadow:inset 2px 2px 4px rgba(0,0,0,0.18)"></div><div class="t" style="left:264.7px;top:515.00px;font-size:14.3px;line-height:15.973px;color:#333333;font-weight:normal;letter-spacing:0px;">StatusID</div><div style="position:absolute;left:416px;top:509px;width:180px;height:26px;box-sizing:border-box;border:1px solid #a4acb7;border-radius:2.5px;background:#fff"></div><div class="t" style="left:422px;top:515.00px;font-size:13.2px;line-height:14.744px;color:#000;font-weight:normal;letter-spacing:0px;-webkit-text-stroke:0.2px #000">Status ID</div><div style="position:absolute;left:603px;top:508px;width:144px;height:28px;box-sizing:border-box;border:1px solid #a4acb7;border-radius:2.5px;background:#fff"></div><div class="t" style="left:612.8px;top:515.00px;font-size:13.2px;line-height:14.744px;color:#000;font-weight:normal;letter-spacing:0px;-webkit-text-stroke:0.2px #000">Integer</div><svg style="position:absolute;left:727.5px;top:517.7px" width="14" height="9" viewBox="0 0 14 9"><path d="M1.4 1.6 L7 7 L12.6 1.6" fill="none" stroke="#000" stroke-width="2.1"/></svg><div style="position:absolute;left:782.2px;top:515px;width:14.6px;height:14.6px;background:#0b75d8;border-radius:2.5px"><svg style="position:absolute;left:0;top:0" width="14.6" height="14.6" viewBox="0 0 14.6 14.6"><path d="M3.2 7.3 L5.6 9.9 L11.3 3.3" fill="none" stroke="#fff" stroke-width="2.1"/></svg></div><div style="position:absolute;left:876.9px;top:515px;width:14.6px;height:14.6px;background:#0b75d8;border-radius:2.5px"><svg style="position:absolute;left:0;top:0" width="14.6" height="14.6" viewBox="0 0 14.6 14.6"><path d="M3.2 7.3 L5.6 9.9 L11.3 3.3" fill="none" stroke="#fff" stroke-width="2.1"/></svg></div><div style="position:absolute;left:982px;top:508px;width:88px;height:28px;box-sizing:border-box;border:1px solid #a4acb7;border-radius:2.5px;background:#fff"></div><div class="t" style="left:992.6px;top:515.00px;font-size:13.2px;line-height:14.744px;color:#000;font-weight:normal;letter-spacing:0px;-webkit-text-stroke:0.2px #000">Left</div><svg style="position:absolute;left:1050.5px;top:517.7px" width="14" height="9" viewBox="0 0 14 9"><path d="M1.4 1.6 L7 7 L12.6 1.6" fill="none" stroke="#000" stroke-width="2.1"/></svg><div style="position:absolute;left:1120px;top:508px;width:88px;height:28px;box-sizing:border-box;border:1px solid #a4acb7;border-radius:2.5px;background:#fff"></div><div class="t" style="left:1130.1px;top:515.00px;font-size:13.2px;line-height:14.744px;color:#000;font-weight:normal;letter-spacing:0px;-webkit-text-stroke:0.2px #000">Left</div><svg style="position:absolute;left:1188.3px;top:517.7px" width="14" height="9" viewBox="0 0 14 9"><path d="M1.4 1.6 L7 7 L12.6 1.6" fill="none" stroke="#000" stroke-width="2.1"/></svg><div style="position:absolute;left:1219px;top:509px;width:180px;height:26px;box-sizing:border-box;border:1px solid #a4acb7;border-radius:2.5px;background:#fff"></div><div style="position:absolute;left:1403px;top:509px;width:26px;height:26px;box-sizing:border-box;border:1.1px solid #aaaaaa;border-radius:4px;background:#fff;box-shadow:inset 2px 2px 4px rgba(0,0,0,0.18)"></div><div class="t" style="left:264.7px;top:551.00px;font-size:14.3px;line-height:15.973px;color:#333333;font-weight:normal;letter-spacing:0px;">DateOfSubmission</div><div style="position:absolute;left:416px;top:546px;width:180px;height:26px;box-sizing:border-box;border:1px solid #a4acb7;border-radius:2.5px;background:#fff"></div><div class="t" style="left:422px;top:552.00px;font-size:13.2px;line-height:14.744px;color:#000;font-weight:normal;letter-spacing:0px;-webkit-text-stroke:0.2px #000">Date Of Submission</div><div style="position:absolute;left:603px;top:545px;width:144px;height:28px;box-sizing:border-box;border:1px solid #a4acb7;border-radius:2.5px;background:#fff"></div><div class="t" style="left:612.8px;top:552.00px;font-size:13.2px;line-height:14.744px;color:#000;font-weight:normal;letter-spacing:0px;-webkit-text-stroke:0.2px #000">Date</div><svg style="position:absolute;left:727.5px;top:554.7px" width="14" height="9" viewBox="0 0 14 9"><path d="M1.4 1.6 L7 7 L12.6 1.6" fill="none" stroke="#000" stroke-width="2.1"/></svg><div style="position:absolute;left:782.2px;top:551px;width:14.6px;height:14.6px;background:#0b75d8;border-radius:2.5px"><svg style="position:absolute;left:0;top:0" width="14.6" height="14.6" viewBox="0 0 14.6 14.6"><path d="M3.2 7.3 L5.6 9.9 L11.3 3.3" fill="none" stroke="#fff" stroke-width="2.1"/></svg></div><div style="position:absolute;left:876.9px;top:551px;width:14.6px;height:14.6px;background:#0b75d8;border-radius:2.5px"><svg style="position:absolute;left:0;top:0" width="14.6" height="14.6" viewBox="0 0 14.6 14.6"><path d="M3.2 7.3 L5.6 9.9 L11.3 3.3" fill="none" stroke="#fff" stroke-width="2.1"/></svg></div><div style="position:absolute;left:982px;top:545px;width:88px;height:28px;box-sizing:border-box;border:1px solid #a4acb7;border-radius:2.5px;background:#fff"></div><div class="t" style="left:992.6px;top:552.00px;font-size:13.2px;line-height:14.744px;color:#000;font-weight:normal;letter-spacing:0px;-webkit-text-stroke:0.2px #000">Left</div><svg style="position:absolute;left:1050.5px;top:554.7px" width="14" height="9" viewBox="0 0 14 9"><path d="M1.4 1.6 L7 7 L12.6 1.6" fill="none" stroke="#000" stroke-width="2.1"/></svg><div style="position:absolute;left:1120px;top:545px;width:88px;height:28px;box-sizing:border-box;border:1px solid #a4acb7;border-radius:2.5px;background:#fff"></div><div class="t" style="left:1130.1px;top:552.00px;font-size:13.2px;line-height:14.744px;color:#000;font-weight:normal;letter-spacing:0px;-webkit-text-stroke:0.2px #000">Left</div><svg style="position:absolute;left:1188.3px;top:554.7px" width="14" height="9" viewBox="0 0 14 9"><path d="M1.4 1.6 L7 7 L12.6 1.6" fill="none" stroke="#000" stroke-width="2.1"/></svg><div style="position:absolute;left:1219px;top:546px;width:180px;height:26px;box-sizing:border-box;border:1px solid #a4acb7;border-radius:2.5px;background:#fff"></div><div style="position:absolute;left:1403px;top:546px;width:26px;height:26px;box-sizing:border-box;border:1.1px solid #aaaaaa;border-radius:4px;background:#fff;box-shadow:inset 2px 2px 4px rgba(0,0,0,0.18)"></div><div class="t" style="left:264.7px;top:588.00px;font-size:14.3px;line-height:15.973px;color:#333333;font-weight:normal;letter-spacing:0px;">ApprovedDate</div><div style="position:absolute;left:416px;top:582px;width:180px;height:27px;box-sizing:border-box;border:1px solid #a4acb7;border-radius:2.5px;background:#fff"></div><div class="t" style="left:422px;top:589.00px;font-size:13.2px;line-height:14.744px;color:#000;font-weight:normal;letter-spacing:0px;-webkit-text-stroke:0.2px #000">Approved Date</div><div style="position:absolute;left:603px;top:582px;width:144px;height:28px;box-sizing:border-box;border:1px solid #a4acb7;border-radius:2.5px;background:#fff"></div><div class="t" style="left:612.8px;top:589.00px;font-size:13.2px;line-height:14.744px;color:#000;font-weight:normal;letter-spacing:0px;-webkit-text-stroke:0.2px #000">Date</div><svg style="position:absolute;left:727.5px;top:591.7px" width="14" height="9" viewBox="0 0 14 9"><path d="M1.4 1.6 L7 7 L12.6 1.6" fill="none" stroke="#000" stroke-width="2.1"/></svg><div style="position:absolute;left:782.2px;top:588px;width:14.6px;height:14.6px;background:#0b75d8;border-radius:2.5px"><svg style="position:absolute;left:0;top:0" width="14.6" height="14.6" viewBox="0 0 14.6 14.6"><path d="M3.2 7.3 L5.6 9.9 L11.3 3.3" fill="none" stroke="#fff" stroke-width="2.1"/></svg></div><div style="position:absolute;left:876.9px;top:588px;width:14.6px;height:14.6px;background:#0b75d8;border-radius:2.5px"><svg style="position:absolute;left:0;top:0" width="14.6" height="14.6" viewBox="0 0 14.6 14.6"><path d="M3.2 7.3 L5.6 9.9 L11.3 3.3" fill="none" stroke="#fff" stroke-width="2.1"/></svg></div><div style="position:absolute;left:982px;top:582px;width:88px;height:28px;box-sizing:border-box;border:1px solid #a4acb7;border-radius:2.5px;background:#fff"></div><div class="t" style="left:992.6px;top:589.00px;font-size:13.2px;line-height:14.744px;color:#000;font-weight:normal;letter-spacing:0px;-webkit-text-stroke:0.2px #000">Left</div><svg style="position:absolute;left:1050.5px;top:591.7px" width="14" height="9" viewBox="0 0 14 9"><path d="M1.4 1.6 L7 7 L12.6 1.6" fill="none" stroke="#000" stroke-width="2.1"/></svg><div style="position:absolute;left:1120px;top:582px;width:88px;height:28px;box-sizing:border-box;border:1px solid #a4acb7;border-radius:2.5px;background:#fff"></div><div class="t" style="left:1130.1px;top:589.00px;font-size:13.2px;line-height:14.744px;color:#000;font-weight:normal;letter-spacing:0px;-webkit-text-stroke:0.2px #000">Left</div><svg style="position:absolute;left:1188.3px;top:591.7px" width="14" height="9" viewBox="0 0 14 9"><path d="M1.4 1.6 L7 7 L12.6 1.6" fill="none" stroke="#000" stroke-width="2.1"/></svg><div style="position:absolute;left:1219px;top:582px;width:180px;height:27px;box-sizing:border-box;border:1px solid #a4acb7;border-radius:2.5px;background:#fff"></div><div style="position:absolute;left:1403px;top:582px;width:26px;height:27px;box-sizing:border-box;border:1.1px solid #aaaaaa;border-radius:4px;background:#fff;box-shadow:inset 2px 2px 4px rgba(0,0,0,0.18)"></div><div class="t" style="left:264.7px;top:625.00px;font-size:14.3px;line-height:15.973px;color:#333333;font-weight:normal;letter-spacing:0px;">RejectedDate</div><div style="position:absolute;left:416px;top:619px;width:180px;height:27px;box-sizing:border-box;border:1px solid #a4acb7;border-radius:2.5px;background:#fff"></div><div class="t" style="left:422px;top:626.00px;font-size:13.2px;line-height:14.744px;color:#000;font-weight:normal;letter-spacing:0px;-webkit-text-stroke:0.2px #000">Rejected Date</div><div style="position:absolute;left:603px;top:618px;width:144px;height:29px;box-sizing:border-box;border:1px solid #a4acb7;border-radius:2.5px;background:#fff"></div><div class="t" style="left:612.8px;top:626.00px;font-size:13.2px;line-height:14.744px;color:#000;font-weight:normal;letter-spacing:0px;-webkit-text-stroke:0.2px #000">Date</div><svg style="position:absolute;left:727.5px;top:627.7px" width="14" height="9" viewBox="0 0 14 9"><path d="M1.4 1.6 L7 7 L12.6 1.6" fill="none" stroke="#000" stroke-width="2.1"/></svg><div style="position:absolute;left:782.2px;top:625px;width:14.6px;height:14.6px;background:#0b75d8;border-radius:2.5px"><svg style="position:absolute;left:0;top:0" width="14.6" height="14.6" viewBox="0 0 14.6 14.6"><path d="M3.2 7.3 L5.6 9.9 L11.3 3.3" fill="none" stroke="#fff" stroke-width="2.1"/></svg></div><div style="position:absolute;left:876.9px;top:625px;width:14.6px;height:14.6px;background:#0b75d8;border-radius:2.5px"><svg style="position:absolute;left:0;top:0" width="14.6" height="14.6" viewBox="0 0 14.6 14.6"><path d="M3.2 7.3 L5.6 9.9 L11.3 3.3" fill="none" stroke="#fff" stroke-width="2.1"/></svg></div><div style="position:absolute;left:982px;top:618px;width:88px;height:29px;box-sizing:border-box;border:1px solid #a4acb7;border-radius:2.5px;background:#fff"></div><div class="t" style="left:992.6px;top:626.00px;font-size:13.2px;line-height:14.744px;color:#000;font-weight:normal;letter-spacing:0px;-webkit-text-stroke:0.2px #000">Left</div><svg style="position:absolute;left:1050.5px;top:627.7px" width="14" height="9" viewBox="0 0 14 9"><path d="M1.4 1.6 L7 7 L12.6 1.6" fill="none" stroke="#000" stroke-width="2.1"/></svg><div style="position:absolute;left:1120px;top:618px;width:88px;height:29px;box-sizing:border-box;border:1px solid #a4acb7;border-radius:2.5px;background:#fff"></div><div class="t" style="left:1130.1px;top:626.00px;font-size:13.2px;line-height:14.744px;color:#000;font-weight:normal;letter-spacing:0px;-webkit-text-stroke:0.2px #000">Left</div><svg style="position:absolute;left:1188.3px;top:627.7px" width="14" height="9" viewBox="0 0 14 9"><path d="M1.4 1.6 L7 7 L12.6 1.6" fill="none" stroke="#000" stroke-width="2.1"/></svg><div style="position:absolute;left:1219px;top:619px;width:180px;height:27px;box-sizing:border-box;border:1px solid #a4acb7;border-radius:2.5px;background:#fff"></div><div style="position:absolute;left:1403px;top:619px;width:26px;height:27px;box-sizing:border-box;border:1.1px solid #aaaaaa;border-radius:4px;background:#fff;box-shadow:inset 2px 2px 4px rgba(0,0,0,0.18)"></div><div class="t" style="left:264.7px;top:662.00px;font-size:14.3px;line-height:15.973px;color:#333333;font-weight:normal;letter-spacing:0px;">Notes</div><div style="position:absolute;left:416px;top:656px;width:180px;height:26px;box-sizing:border-box;border:1px solid #a4acb7;border-radius:2.5px;background:#fff"></div><div class="t" style="left:422px;top:663.00px;font-size:13.2px;line-height:14.744px;color:#000;font-weight:normal;letter-spacing:0px;-webkit-text-stroke:0.2px #000">Notes</div><div style="position:absolute;left:603px;top:655px;width:144px;height:29px;box-sizing:border-box;border:1px solid #a4acb7;border-radius:2.5px;background:#fff"></div><div class="t" style="left:612.8px;top:663.00px;font-size:13.2px;line-height:14.744px;color:#000;font-weight:normal;letter-spacing:0px;-webkit-text-stroke:0.2px #000">Text</div><svg style="position:absolute;left:727.5px;top:664.7px" width="14" height="9" viewBox="0 0 14 9"><path d="M1.4 1.6 L7 7 L12.6 1.6" fill="none" stroke="#000" stroke-width="2.1"/></svg><div style="position:absolute;left:782.2px;top:662px;width:14.6px;height:14.6px;background:#0b75d8;border-radius:2.5px"><svg style="position:absolute;left:0;top:0" width="14.6" height="14.6" viewBox="0 0 14.6 14.6"><path d="M3.2 7.3 L5.6 9.9 L11.3 3.3" fill="none" stroke="#fff" stroke-width="2.1"/></svg></div><div style="position:absolute;left:876.9px;top:662px;width:14.6px;height:14.6px;background:#0b75d8;border-radius:2.5px"><svg style="position:absolute;left:0;top:0" width="14.6" height="14.6" viewBox="0 0 14.6 14.6"><path d="M3.2 7.3 L5.6 9.9 L11.3 3.3" fill="none" stroke="#fff" stroke-width="2.1"/></svg></div><div style="position:absolute;left:982px;top:655px;width:88px;height:29px;box-sizing:border-box;border:1px solid #a4acb7;border-radius:2.5px;background:#fff"></div><div class="t" style="left:992.6px;top:663.00px;font-size:13.2px;line-height:14.744px;color:#000;font-weight:normal;letter-spacing:0px;-webkit-text-stroke:0.2px #000">Left</div><svg style="position:absolute;left:1050.5px;top:664.7px" width="14" height="9" viewBox="0 0 14 9"><path d="M1.4 1.6 L7 7 L12.6 1.6" fill="none" stroke="#000" stroke-width="2.1"/></svg><div style="position:absolute;left:1120px;top:655px;width:88px;height:29px;box-sizing:border-box;border:1px solid #a4acb7;border-radius:2.5px;background:#fff"></div><div class="t" style="left:1130.1px;top:663.00px;font-size:13.2px;line-height:14.744px;color:#000;font-weight:normal;letter-spacing:0px;-webkit-text-stroke:0.2px #000">Left</div><svg style="position:absolute;left:1188.3px;top:664.7px" width="14" height="9" viewBox="0 0 14 9"><path d="M1.4 1.6 L7 7 L12.6 1.6" fill="none" stroke="#000" stroke-width="2.1"/></svg><div style="position:absolute;left:1219px;top:656px;width:180px;height:26px;box-sizing:border-box;border:1px solid #a4acb7;border-radius:2.5px;background:#fff"></div><div style="position:absolute;left:1403px;top:656px;width:26px;height:26px;box-sizing:border-box;border:1.1px solid #aaaaaa;border-radius:4px;background:#fff;box-shadow:inset 2px 2px 4px rgba(0,0,0,0.18)"></div><div class="t" style="left:264.7px;top:698.00px;font-size:14.3px;line-height:15.973px;color:#333333;font-weight:normal;letter-spacing:0px;">usr_login</div><div style="position:absolute;left:416px;top:693px;width:180px;height:26px;box-sizing:border-box;border:1px solid #a4acb7;border-radius:2.5px;background:#fff"></div><div class="t" style="left:422px;top:699.00px;font-size:13.2px;line-height:14.744px;color:#000;font-weight:normal;letter-spacing:0px;-webkit-text-stroke:0.2px #000">Usr Login</div><div style="position:absolute;left:603px;top:692px;width:144px;height:28px;box-sizing:border-box;border:1px solid #a4acb7;border-radius:2.5px;background:#fff"></div><div class="t" style="left:612.8px;top:699.00px;font-size:13.2px;line-height:14.744px;color:#000;font-weight:normal;letter-spacing:0px;-webkit-text-stroke:0.2px #000">Text</div><svg style="position:absolute;left:727.5px;top:701.7px" width="14" height="9" viewBox="0 0 14 9"><path d="M1.4 1.6 L7 7 L12.6 1.6" fill="none" stroke="#000" stroke-width="2.1"/></svg><div style="position:absolute;left:782.2px;top:698px;width:14.6px;height:14.6px;background:#0b75d8;border-radius:2.5px"><svg style="position:absolute;left:0;top:0" width="14.6" height="14.6" viewBox="0 0 14.6 14.6"><path d="M3.2 7.3 L5.6 9.9 L11.3 3.3" fill="none" stroke="#fff" stroke-width="2.1"/></svg></div><div style="position:absolute;left:876.9px;top:698px;width:14.6px;height:14.6px;background:#0b75d8;border-radius:2.5px"><svg style="position:absolute;left:0;top:0" width="14.6" height="14.6" viewBox="0 0 14.6 14.6"><path d="M3.2 7.3 L5.6 9.9 L11.3 3.3" fill="none" stroke="#fff" stroke-width="2.1"/></svg></div><div style="position:absolute;left:982px;top:692px;width:88px;height:28px;box-sizing:border-box;border:1px solid #a4acb7;border-radius:2.5px;background:#fff"></div><div class="t" style="left:992.6px;top:699.00px;font-size:13.2px;line-height:14.744px;color:#000;font-weight:normal;letter-spacing:0px;-webkit-text-stroke:0.2px #000">Left</div><svg style="position:absolute;left:1050.5px;top:701.7px" width="14" height="9" viewBox="0 0 14 9"><path d="M1.4 1.6 L7 7 L12.6 1.6" fill="none" stroke="#000" stroke-width="2.1"/></svg><div style="position:absolute;left:1120px;top:692px;width:88px;height:28px;box-sizing:border-box;border:1px solid #a4acb7;border-radius:2.5px;background:#fff"></div><div class="t" style="left:1130.1px;top:699.00px;font-size:13.2px;line-height:14.744px;color:#000;font-weight:normal;letter-spacing:0px;-webkit-text-stroke:0.2px #000">Left</div><svg style="position:absolute;left:1188.3px;top:701.7px" width="14" height="9" viewBox="0 0 14 9"><path d="M1.4 1.6 L7 7 L12.6 1.6" fill="none" stroke="#000" stroke-width="2.1"/></svg><div style="position:absolute;left:1219px;top:693px;width:180px;height:26px;box-sizing:border-box;border:1px solid #a4acb7;border-radius:2.5px;background:#fff"></div><div style="position:absolute;left:1403px;top:693px;width:26px;height:26px;box-sizing:border-box;border:1.1px solid #aaaaaa;border-radius:4px;background:#fff;box-shadow:inset 2px 2px 4px rgba(0,0,0,0.18)"></div><div style="position:absolute;left:0px;top:713.5px;width:118px;height:19px;background:#d3e3fd;border-top-right-radius:6px"></div><div class="t" style="left:-6px;top:720px;font-size:17.3px;line-height:19px;color:#1f1f1f">ldsEditionDef&#39;)</div>
</body></html>
